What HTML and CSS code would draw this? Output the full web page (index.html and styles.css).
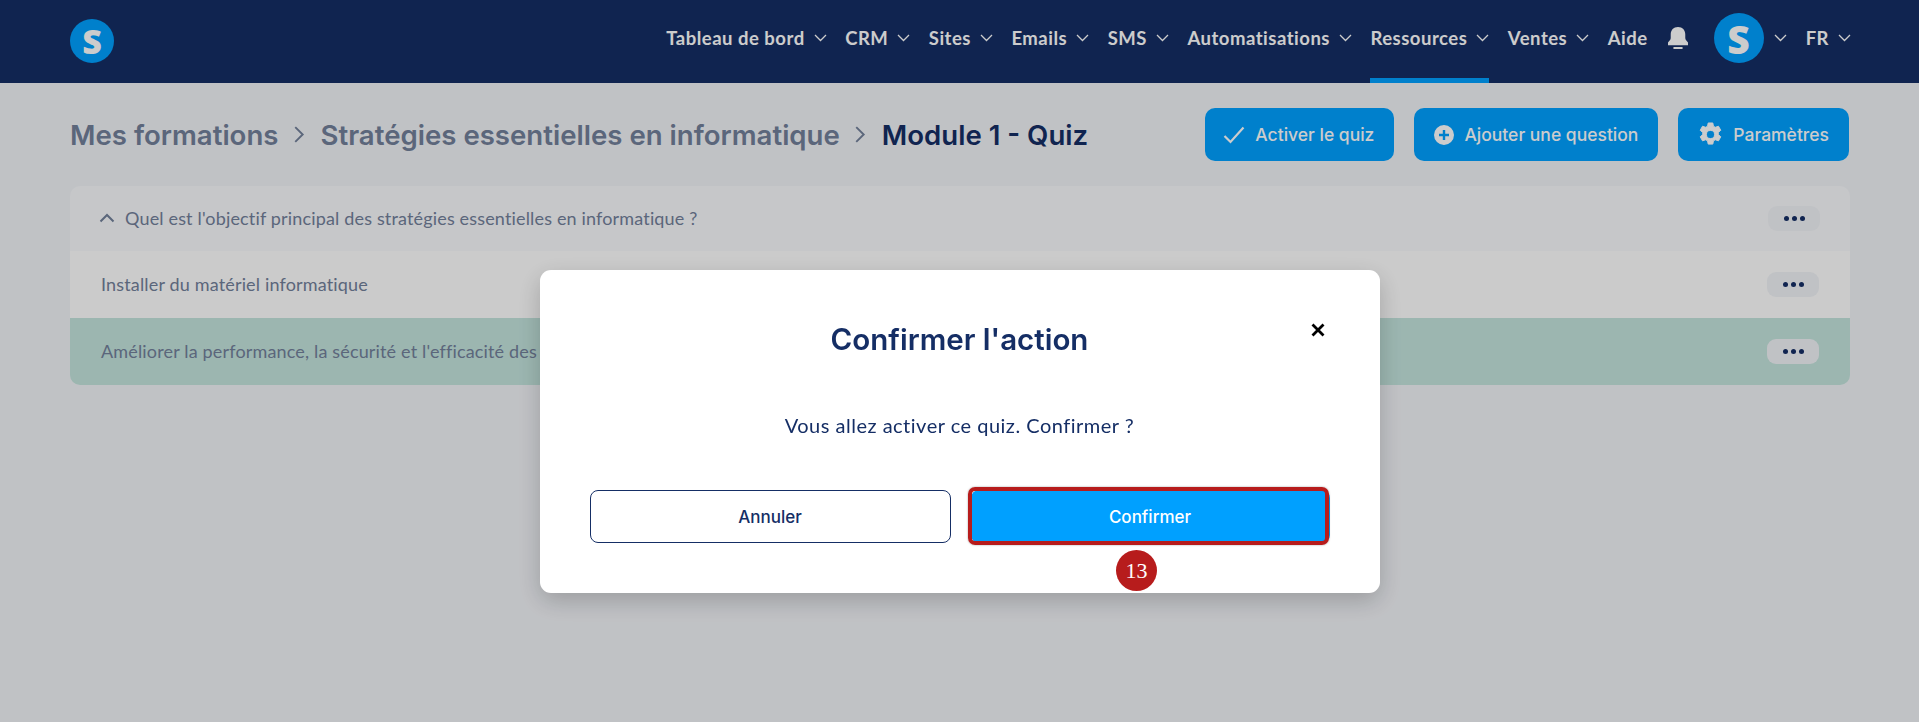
FILE: index.html
```html
<!DOCTYPE HTML>
<html>

<head>
    <meta name="viewport" content="width=device-width, initial-scale=1">
    <title>Module 1 - Quiz</title>
    <link rel="stylesheet" href="styles.css">
</head>

<body>
    <header class="topbar">
        <span class="logo">S</span>
        <nav class="nav">
            <a>Tableau de bord <svg class="chev" viewBox="0 0 13 8"><path d="M1 1l5.500 5.500L12 1"/></svg></a>
            <a>CRM <svg class="chev" viewBox="0 0 13 8"><path d="M1 1l5.500 5.500L12 1"/></svg></a>
            <a>Sites <svg class="chev" viewBox="0 0 13 8"><path d="M1 1l5.500 5.500L12 1"/></svg></a>
            <a>Emails <svg class="chev" viewBox="0 0 13 8"><path d="M1 1l5.500 5.500L12 1"/></svg></a>
            <a>SMS <svg class="chev" viewBox="0 0 13 8"><path d="M1 1l5.500 5.500L12 1"/></svg></a>
            <a>Automatisations <svg class="chev" viewBox="0 0 13 8"><path d="M1 1l5.500 5.500L12 1"/></svg></a>
            <a class="active">Ressources <svg class="chev" viewBox="0 0 13 8"><path d="M1 1l5.500 5.500L12 1"/></svg></a>
            <a>Ventes <svg class="chev" viewBox="0 0 13 8"><path d="M1 1l5.500 5.500L12 1"/></svg></a>
            <a>Aide</a>
            <svg class="bell" viewBox="0 0 22 24"><path d="M11 0C6 0 3 3.500 3 8v4c0 2-1.500 3-3 5v3h22v-3c-1.500-2-3-3-3-5V8c0-4.500-3-8-8-8zM6 22h10v2H6z"/></svg>
            <span class="avatar">S</span>
            <svg class="chev chev-user" viewBox="0 0 13 8"><path d="M1 1l5.500 5.500L12 1"/></svg>
            <a>FR <svg class="chev" viewBox="0 0 13 8"><path d="M1 1l5.500 5.500L12 1"/></svg></a>
        </nav>
    </header>

    <main class="content">
        <div class="title-row">
            <div class="crumbs">
                <span>Mes formations</span>
                <svg class="crumb-sep" viewBox="0 0 10 16"><path d="M1 1l7 7-7 7"/></svg>
                <span>Stratégies essentielles en informatique</span>
                <svg class="crumb-sep" viewBox="0 0 10 16"><path d="M1 1l7 7-7 7"/></svg>
                <span class="current">Module 1 - Quiz</span>
            </div>
            <div class="actions">
                <button class="btn btn-activate">
                    <svg class="btn-check" viewBox="0 0 22 18"><path d="M1.500 10l6 6L20.500 1.500"/></svg>
                    Activer le quiz
                </button>
                <button class="btn">
                    <svg class="btn-icon" viewBox="0 0 20 20"><path fill-rule="evenodd" d="M10 0a10 10 0 1 1 0 20a10 10 0 1 1 0-20zM8.800 5v3.800H5v2.400h3.800V15h2.400v-3.800H15V8.800h-3.800V5z"/></svg>
                    Ajouter une question
                </button>
                <button class="btn">
                    <svg class="btn-icon gear" viewBox="-1 -1 26 26"><path fill-rule="evenodd" d="M9.600 0h4.800l.7 3.400 1.900 1.100 3.300-1.100 2.400 4.200-2.600 2.300v2.200l2.600 2.300-2.400 4.200-3.300-1.100-1.900 1.100-.7 3.400H9.600l-.7-3.400-1.900-1.100-3.300 1.100-2.400-4.200 2.600-2.300V9.900L1.300 7.600l2.400-4.200L7 4.500l1.900-1.100zM12 7.800a4.200 4.200 0 1 0 0 8.400a4.200 4.200 0 1 0 0-8.400z"/></svg>
                    Paramètres
                </button>
            </div>
        </div>

        <div class="quiz">
            <div class="row row-head">
                <span class="row-label">
                    <svg class="row-chev" viewBox="0 0 16 10"><path d="M1.500 8.500L8 2l6.500 6.500"/></svg>
                    Quel est l'objectif principal des stratégies essentielles en informatique ?
                </span>
                <span class="dots"><i></i><i></i><i></i></span>
            </div>
            <div class="row">
                <span class="row-label">Installer du matériel informatique</span>
                <span class="dots"><i></i><i></i><i></i></span>
            </div>
            <div class="row row-ok">
                <span class="row-label">Améliorer la performance, la sécurité et l'efficacité des systèmes informatiques</span>
                <span class="dots"><i></i><i></i><i></i></span>
            </div>
        </div>
    </main>

    <div class="overlay">
        <div class="modal">
            <h2 class="modal-title">Confirmer l'action</h2>
            <svg class="modal-close" viewBox="0 0 14 14"><path d="M1.500 1.500l11 11M12.500 1.500l-11 11"/></svg>
            <p class="modal-text">Vous allez activer ce quiz. Confirmer ?</p>
            <div class="modal-btns">
                <button class="mbtn mbtn-cancel">Annuler</button>
                <button class="mbtn mbtn-ok">Confirmer<span class="highlight"></span><span class="step">13</span></button>
            </div>
        </div>
    </div>
</body>

</html>
```

FILE: styles.css
```css
html {
    font-family: Lato, sans-serif;
}

body {
    margin: 0px;
    height: 722px;
    overflow: hidden;
    background: #f1f3f7;
}

/* top bar */
.topbar {
    display: flex;
    align-items: center;
    justify-content: space-between;
    height: 83px;
    padding: 0 68px 0 70px;
    background: #152e65;
}

.logo,
.avatar {
    display: flex;
    align-items: center;
    justify-content: center;
    border-radius: 50%;
    background: #00a0ff;
    color: #fff;
    font-family: "Open Sans", sans-serif;
    font-weight: 800;
    letter-spacing: 0;
}

.logo {
    width: 44px;
    height: 44px;
    margin-bottom: 2px;
    font-size: 34px;
}

.avatar {
    align-self: center;
    width: 50px;
    height: 50px;
    margin-left: 7px;
    margin-bottom: 7px;
    font-size: 39px;
}

.nav {
    display: flex;
    gap: 18.5px;
    align-self: stretch;
    color: #fff;
    font-size: 18.5px;
    font-weight: 700;
    letter-spacing: 0.5px;
}

.nav > svg {
    align-self: center;
    margin-bottom: 7px;
}

.nav a {
    display: flex;
    align-items: center;
    gap: 9px;
    padding-bottom: 2px;
    border-bottom: 5px solid transparent;
}

.nav a.active {
    border-bottom-color: #00a0ff;
}

.chev {
    width: 13px;
    height: 8px;
    fill: none;
    stroke: #fff;
    stroke-width: 1.3;
}

.chev-user {
    margin-left: -8px;
}

.bell {
    width: 20px;
    height: 22px;
    margin-left: 2px;
    fill: #fff;
}

/* page content */
.content {
    padding: 25px 69px 0 70px;
}

.title-row {
    display: flex;
    align-items: center;
    justify-content: space-between;
    height: 53px;
}

.crumbs {
    display: flex;
    align-items: center;
    gap: 15.5px;
    font-family: Inter, sans-serif;
    font-size: 27.6px;
    font-weight: 600;
    color: #72809a;
}

.crumbs .current {
    color: #152e65;
}

.crumb-sep {
    width: 11px;
    height: 17px;
    fill: none;
    stroke: #72809a;
    stroke-width: 1.8;
}

.actions {
    display: flex;
    gap: 20px;
    margin-right: 1px;
}

.btn {
    display: flex;
    align-items: center;
    gap: 10px;
    height: 53px;
    padding: 0 20px;
    border: 0;
    border-radius: 10px;
    background: #00a0ff;
    color: #fff;
    font-family: Inter, sans-serif;
    font-size: 17.5px;
    font-weight: 500;
}

.btn-activate {
    padding-left: 18px;
}

.btn-check {
    width: 22px;
    height: 18px;
    fill: none;
    stroke: #fff;
    stroke-width: 2.2;
}

.btn-icon {
    width: 20px;
    height: 20px;
    fill: #fff;
}

.gear {
    width: 25px;
    height: 25px;
    stroke: #fff;
    stroke-width: 1;
    stroke-linejoin: round;
}

.quiz {
    margin-top: 25px;
    border-radius: 10px;
    overflow: hidden;
    font-size: 18px;
    letter-spacing: 0.16px;
    color: #72809a;
}

.row {
    display: flex;
    align-items: center;
    justify-content: space-between;
    height: 67px;
    padding: 0 31px 0 31px;
    background: #fefefe;
}

.row-head {
    height: 65px;
    padding: 0 30px 0 29px;
    background: #f8f9fc;
}

.row-ok {
    background: #c3e4dd;
}

.row-label {
    display: flex;
    align-items: center;
    gap: 10px;
    padding-bottom: 2px;
}

.row-chev {
    width: 16px;
    height: 10px;
    fill: none;
    stroke: #72809a;
    stroke-width: 2;
}

.dots {
    display: flex;
    align-items: center;
    justify-content: center;
    gap: 3px;
    width: 52px;
    height: 25px;
    border-radius: 9px;
    background: #f1f3f7;
}

.dots i {
    width: 5px;
    height: 5px;
    border-radius: 50%;
    background: #152e65;
}

/* confirm dialog */
.overlay {
    position: fixed;
    top: 0;
    left: 0;
    right: 0;
    bottom: 0;
    display: flex;
    justify-content: center;
    align-items: flex-start;
    padding-top: 270px;
    background: rgba(0, 0, 0, 0.2);
}

.modal {
    position: relative;
    box-sizing: border-box;
    width: 840px;
    height: 323px;
    padding: 50px 50px 0;
    border-radius: 11px;
    background: #fff;
    box-shadow: 0 8px 24px rgba(0, 0, 0, 0.2);
    color: #152e65;
    text-align: center;
}

.modal-title {
    margin: 0;
    font-family: Inter, sans-serif;
    font-size: 29.5px;
    font-weight: 600;
    line-height: 38px;
}

.modal-close {
    position: absolute;
    top: 53px;
    right: 55px;
    width: 14px;
    height: 14px;
    fill: none;
    stroke: #000;
    stroke-width: 2.8;
}

.modal-text {
    margin: 55px 0 0;
    font-size: 20px;
    letter-spacing: 0.5px;
    line-height: 24px;
}

.modal-btns {
    display: flex;
    gap: 20px;
    margin-top: 53px;
}

.mbtn {
    position: relative;
    flex: 1;
    height: 53px;
    border-radius: 8px;
    font-family: Inter, sans-serif;
    font-size: 17px;
    font-weight: 500;
}

.mbtn-cancel {
    border: 1px solid #152e65;
    background: #fff;
    color: #152e65;
}

.mbtn-ok {
    border: 0;
    background: #00a0ff;
    color: #fff;
}

.highlight {
    position: absolute;
    top: -3px;
    left: -3px;
    right: 1px;
    bottom: -2px;
    border: 4px solid #b71c1c;
    border-radius: 7px;
    box-shadow: 0 0 2px rgba(0, 0, 0, 0.4);
}

.step {
    position: absolute;
    left: 50%;
    top: 60px;
    width: 41px;
    height: 41px;
    margin-left: -34px;
    border-radius: 50%;
    background: #b71c1c;
    font-family: "Liberation Serif", serif;
    font-size: 22px;
    font-weight: 400;
    line-height: 41px;
}
```
